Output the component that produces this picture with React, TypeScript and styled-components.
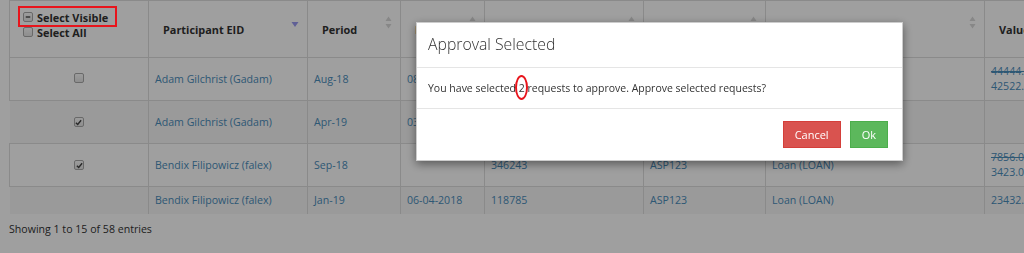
import React from "react";
import styled, { createGlobalStyle } from "styled-components";

const GlobalStyle = createGlobalStyle`
  body {
    margin: 0;
    background: #ffffff;
    font-family: "Open Sans", "Liberation Sans", sans-serif;
    color: #333333;
    overflow: hidden;
  }
`;

const Page = styled.div`
  width: 1024px;
  height: 253px;
  overflow: hidden;
  padding-left: 9px;
  box-sizing: border-box;
`;

const Table = styled.table`
  border-collapse: collapse;
  table-layout: fixed;
  width: 1085px;
  font-size: 10.6px;
  border-top: 1px solid #dddddd;
`;

const Th = styled.th<{ $first?: boolean }>`
  position: relative;
  height: 57px;
  box-sizing: border-box;
  padding: ${(p) => (p.$first ? "7px 8px 0 13px" : "0 20px 0 14px")};
  vertical-align: ${(p) => (p.$first ? "top" : "middle")};
  text-align: left;
  font-weight: 700;
  font-size: 10.9px;
  line-height: 15px;
  color: #333333;
  border-right: 1px solid #dddddd;
  border-left: ${(p) => (p.$first ? "1px solid #dddddd" : "none")};
  border-bottom: 1px solid #dddddd;
`;

const SelectLine = styled.div<{ $marked?: boolean }>`
  position: relative;
  display: inline-flex;
  align-items: center;
  gap: 4px;
  white-space: nowrap;

  ${(p) =>
    p.$marked &&
    `
    &::after {
      content: "";
      position: absolute;
      left: -5px;
      right: -9px;
      top: -4px;
      bottom: -2px;
      border: 2px solid #e8141b;
      z-index: 30;
    }
  `}
`;

const Box = styled.span`
  display: inline-flex;
  align-items: center;
  justify-content: center;
  width: 8px;
  height: 8px;
  border: 1px solid #a9a9a9;
  border-radius: 2px;
  background: linear-gradient(#fbfbfb, #e4e4e4);
  flex-shrink: 0;
`;

const SortIcon = styled.span`
  position: absolute;
  right: 8px;
  top: 15px;
  display: flex;
`;

const Td = styled.td<{ $edge?: boolean; $center?: boolean }>`
  padding: 6px 6px;
  line-height: 15px;
  vertical-align: middle;
  text-align: ${(p) => (p.$center ? "center" : "left")};
  color: #4a8dbb;
  white-space: nowrap;
  overflow: hidden;
  border-right: 1px solid #dddddd;
  border-left: ${(p) => (p.$edge ? "1px solid #dddddd" : "none")};
  border-top: 1px solid #dddddd;
`;

const Row = styled.tr<{ $striped?: boolean }>`
  background: ${(p) => (p.$striped ? "#ffffff" : "#f7f7f7")};
`;

const Old = styled.div`
  text-decoration: line-through;
`;

const Info = styled.div`
  margin-top: 8px;
  font-size: 10.6px;
  line-height: 15px;
  color: #333333;
`;

const Backdrop = styled.div`
  position: fixed;
  inset: 0;
  background: rgba(0, 0, 0, 0.375);
  z-index: 10;
`;

const Modal = styled.div`
  position: fixed;
  left: 416px;
  top: 22px;
  width: 487px;
  background: #ffffff;
  border: 1px solid rgba(0, 0, 0, 0.2);
  box-shadow: 0 3px 9px rgba(0, 0, 0, 0.45);
  box-sizing: border-box;
  z-index: 20;
`;

const ModalHeader = styled.div`
  height: 45px;
  box-sizing: border-box;
  display: flex;
  align-items: center;
  padding: 0 11px 2px;
  border-bottom: 1px solid #e5e5e5;
`;

const ModalTitle = styled.h4`
  margin: 0;
  font-size: 15.8px;
  font-weight: 300;
  color: #333333;
`;

const ModalBody = styled.div`
  height: 40px;
  display: flex;
  align-items: center;
  padding: 0 11px;
  font-size: 10.5px;
  color: #333333;
`;

const Ring = styled.span`
  position: relative;

  &::after {
    content: "";
    position: absolute;
    left: -4px;
    right: -3px;
    top: -6px;
    bottom: -5px;
    border: 2px solid #e8141b;
    border-radius: 50%;
  }
`;

const ModalFooter = styled.div`
  display: flex;
  justify-content: flex-end;
  gap: 9px;
  padding: 12px 14px 12px;
  border-top: 1px solid #e5e5e5;
`;

const Button = styled.button<{ $tone: "danger" | "success" }>`
  height: 27px;
  padding: 0 11px;
  font-family: "Open Sans", "Liberation Sans", sans-serif;
  font-size: 11px;
  color: #ffffff;
  border-radius: 0;
  border: 1px solid ${(p) => (p.$tone === "danger" ? "#d43f3a" : "#4cae4c")};
  background: ${(p) => (p.$tone === "danger" ? "#d9534f" : "#5cb85c")};
  cursor: pointer;
`;

const Check = () => (
  <svg width="7" height="7" viewBox="0 0 8 8">
    <path d="M1 4.2 L3.1 6.3 L7 1.5" fill="none" stroke="#444" strokeWidth="1.6" />
  </svg>
);

const Minus = () => (
  <svg width="6" height="6" viewBox="0 0 8 8">
    <path d="M1 4 H7" stroke="#444" strokeWidth="1.8" />
  </svg>
);

const BothArrows = () => (
  <svg width="7" height="13" viewBox="0 0 7 13">
    <path d="M3.5 0.5 L6.5 5 H0.5 Z" fill="#d8d8d8" />
    <path d="M3.5 12.5 L6.5 8 H0.5 Z" fill="#d8d8d8" />
  </svg>
);

const DownArrow = () => (
  <svg width="8" height="13" viewBox="0 0 8 13">
    <path d="M0.5 6 H7.5 L4 11 Z" fill="#9b9bf0" />
  </svg>
);

type Cell = string | string[] | { old: string; now: string } | null;

interface Entry {
  check: "on" | "off" | "none";
  cells: Cell[];
}

const headers = ["Participant EID", "Period", "Date", "Request ID", "Plan", "Source", "Value"];
const widths = [139, 159, 93, 84, 159, 122, 219, 110];

const rows: Entry[] = [
  {
    check: "off",
    cells: [
      "Adam Gilchrist (Gadam)",
      "Aug-18",
      "08-08-2018",
      "346241",
      "ASP123",
      "Loan (LOAN)",
      { old: "44444.00", now: "42522.00" },
    ],
  },
  {
    check: "on",
    cells: [
      "Adam Gilchrist (Gadam)",
      "Apr-19",
      "03-04-2019",
      ["346242", "346245"],
      "ASP123",
      "Loan (LOAN)",
      null,
    ],
  },
  {
    check: "on",
    cells: [
      "Bendix Filipowicz (falex)",
      "Sep-18",
      null,
      "346243",
      "ASP123",
      "Loan (LOAN)",
      { old: "7856.00", now: "3423.00" },
    ],
  },
  {
    check: "none",
    cells: [
      "Bendix Filipowicz (falex)",
      "Jan-19",
      "06-04-2018",
      "118785",
      "ASP123",
      "Loan (LOAN)",
      "23432.00",
    ],
  },
];

const renderCell = (c: Cell) => {
  if (c === null) return null;
  if (typeof c === "string") return c;
  if (Array.isArray(c)) return c.map((line) => <div key={line}>{line}</div>);
  return (
    <>
      <Old>{c.old}</Old>
      <div>{c.now}</div>
    </>
  );
};

export default function App() {
  return (
    <>
      <GlobalStyle />
      <Page>
        <Table>
          <colgroup>
            {widths.map((w, i) => (
              <col key={i} style={{ width: w }} />
            ))}
          </colgroup>
          <thead>
            <tr>
              <Th $first>
                <SelectLine $marked>
                  <Box>
                    <Minus />
                  </Box>
                  Select Visible
                </SelectLine>
                <br />
                <SelectLine>
                  <Box />
                  Select All
                </SelectLine>
              </Th>
              {headers.map((h, i) => (
                <Th key={h}>
                  {h}
                  <SortIcon>{i === 0 ? <DownArrow /> : <BothArrows />}</SortIcon>
                </Th>
              ))}
            </tr>
          </thead>
          <tbody>
            {rows.map((r, i) => (
              <Row key={i} $striped={i % 2 === 0}>
                <Td $center $edge={i % 2 === 0}>
                  {r.check !== "none" && <Box>{r.check === "on" && <Check />}</Box>}
                </Td>
                {r.cells.map((c, j) => (
                  <Td key={j}>{renderCell(c)}</Td>
                ))}
              </Row>
            ))}
          </tbody>
        </Table>
        <Info>Showing 1 to 15 of 58 entries</Info>
      </Page>
      <Backdrop />
      <Modal>
        <ModalHeader>
          <ModalTitle>Approval Selected</ModalTitle>
        </ModalHeader>
        <ModalBody>
          <span>
            You have selected <Ring>2</Ring> requests to approve. Approve selected
            requests?
          </span>
        </ModalBody>
        <ModalFooter>
          <Button $tone="danger">Cancel</Button>
          <Button $tone="success">Ok</Button>
        </ModalFooter>
      </Modal>
    </>
  );
}
